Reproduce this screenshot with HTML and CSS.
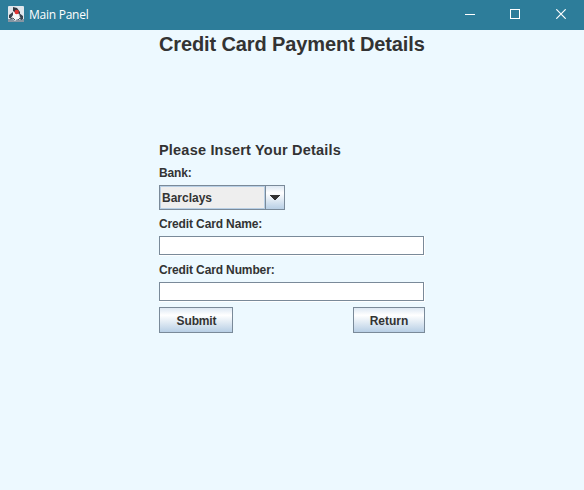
FILE: index.html
```
<!DOCTYPE html>
<html lang="en">
<head>
<meta charset="utf-8">
<title>Main Panel</title>
<link rel="stylesheet" href="styles.css">
</head>
<body>
<header class="titlebar">
  <svg class="app-icon" width="16" height="16" viewBox="0 0 16 16">
    <rect width="16" height="16" rx="1" fill="#dfe6ec"/>
    <path d="M0 16V13H16V16Z" fill="#8796a3"/>
    <path d="M5 1L9 2L12 6L12 8L8 7L5 5Z" fill="#343a42"/>
    <path d="M5 6L10 8L12 14L9 13L7 15L4 12Z" fill="#f7f8f9"/>
    <path d="M1 9L5 6L5 9L3 12L1 12ZM11 7L15 10L15 13L13 13L12 11Z" fill="#39434e"/>
    <path d="M2 13L5 12L7 14M10 14L12 12L14 14" stroke="#4a5661" fill="none"/>
    <circle cx="8.7" cy="6" r="2.2" fill="#e23434"/>
  </svg>
  <span class="window-name">Main Panel</span>
  <div class="controls">
    <svg width="10" height="10" shape-rendering="crispEdges"><path d="M0 5.5H10" stroke="#fff"/></svg>
    <svg width="10" height="10" shape-rendering="crispEdges"><path d="M.5 .5H9.5V9.5H.5Z" stroke="#fff" fill="none"/></svg>
    <svg class="close" width="10" height="10"><path d="M.3 .3L9.7 9.7M9.7 .3L.3 9.7" stroke="#fff" stroke-width="1.2"/></svg>
  </div>
</header>
<main class="panel">
  <h1>Credit Card Payment Details</h1>
  <h2>Please Insert Your Details</h2>
  <label class="bank-label">Bank:</label>
  <div class="combo">
    <span class="combo-value">Barclays</span>
    <span class="combo-arrow"><svg width="10" height="5" shape-rendering="crispEdges"><path d="M0 0H10V1H9V2H8V3H7V4H6V5H4V4H3V3H2V2H1V1H0Z" fill="#333"/></svg></span>
  </div>
  <label for="name">Credit Card Name:</label>
  <div class="field"><input id="name" type="text"></div>
  <label for="number">Credit Card Number:</label>
  <div class="field"><input id="number" type="text"></div>
  <div class="actions">
    <button class="submit"><span>Submit</span></button>
    <button class="return"><span>Return</span></button>
  </div>
</main>
</body>
</html>
```
FILE: styles.css
```
* { box-sizing: border-box; }
body {
  margin: 0;
  height: 490px;
  background: #edf9ff;
  color: #333;
  font-family: "Liberation Sans", Arial, sans-serif;
  overflow: hidden;
}
svg { display: block; }
.titlebar {
  display: flex;
  align-items: center;
  height: 30px;
  padding: 0 18px 2px 8px;
  background: #2d7d9a;
  color: #fff;
}
.window-name {
  margin-left: 5px;
  padding-top: 2px;
  font: 12px/16px "Open Sans", sans-serif;
  letter-spacing: -0.25px;
}
.controls { display: flex; gap: 35px; margin-left: auto; }
.close { margin-left: 1px; }
.panel {
  display: flex;
  flex-direction: column;
  width: 266px;
  margin-left: 159px;
}
h1, h2 { margin: 0; white-space: nowrap; }
h1 { font-size: 20px; line-height: 28px; letter-spacing: -0.12px; }
h2 { margin-top: 82px; font-size: 14.5px; line-height: 20px; letter-spacing: 0.2px; }
label { height: 26px; font-size: 12px; font-weight: bold; line-height: 29px; letter-spacing: -0.13px; white-space: nowrap; }
label.bank-label { height: 25px; line-height: 26px; }
.combo {
  display: flex;
  width: 126px;
  height: 25px;
  border: 1px solid #7a8a99;
  font-size: 12px;
  font-weight: bold;
}
.combo-value {
  flex: 1;
  padding-left: 1px;
  border: 1px solid #b8cfe5;
  background: #eee;
  line-height: 22px;
}
.combo-arrow {
  display: flex;
  align-items: center;
  justify-content: center;
  width: 19px;
  border-left: 1px solid #7a8a99;
  background: linear-gradient(#dde8f3 0%, #fff 30%, #b8cfe5 100%);
}
.field {
  height: 20px;
  border: solid #fff;
  border-width: 0 1px 1px 0;
}
input {
  display: block;
  width: 100%;
  height: 19px;
  padding: 0 2px;
  border: 1px solid #7a8a99;
  border-radius: 0;
  background: #fff;
  outline: none;
}
.actions { display: flex; justify-content: space-between; margin-top: 5px; }
button {
  height: 26px;
  padding: 2px 0 0;
  border: 1px solid #7a8a99;
  border-radius: 0;
  background: linear-gradient(#dde8f3 0%, #fff 30%, #b8cfe5 100%);
  color: #333;
  font: bold 12px/22px "Liberation Sans", Arial, sans-serif;
}
.submit { width: 74px; padding-left: 1px; letter-spacing: -0.15px; }
.return { width: 72px; }
```
